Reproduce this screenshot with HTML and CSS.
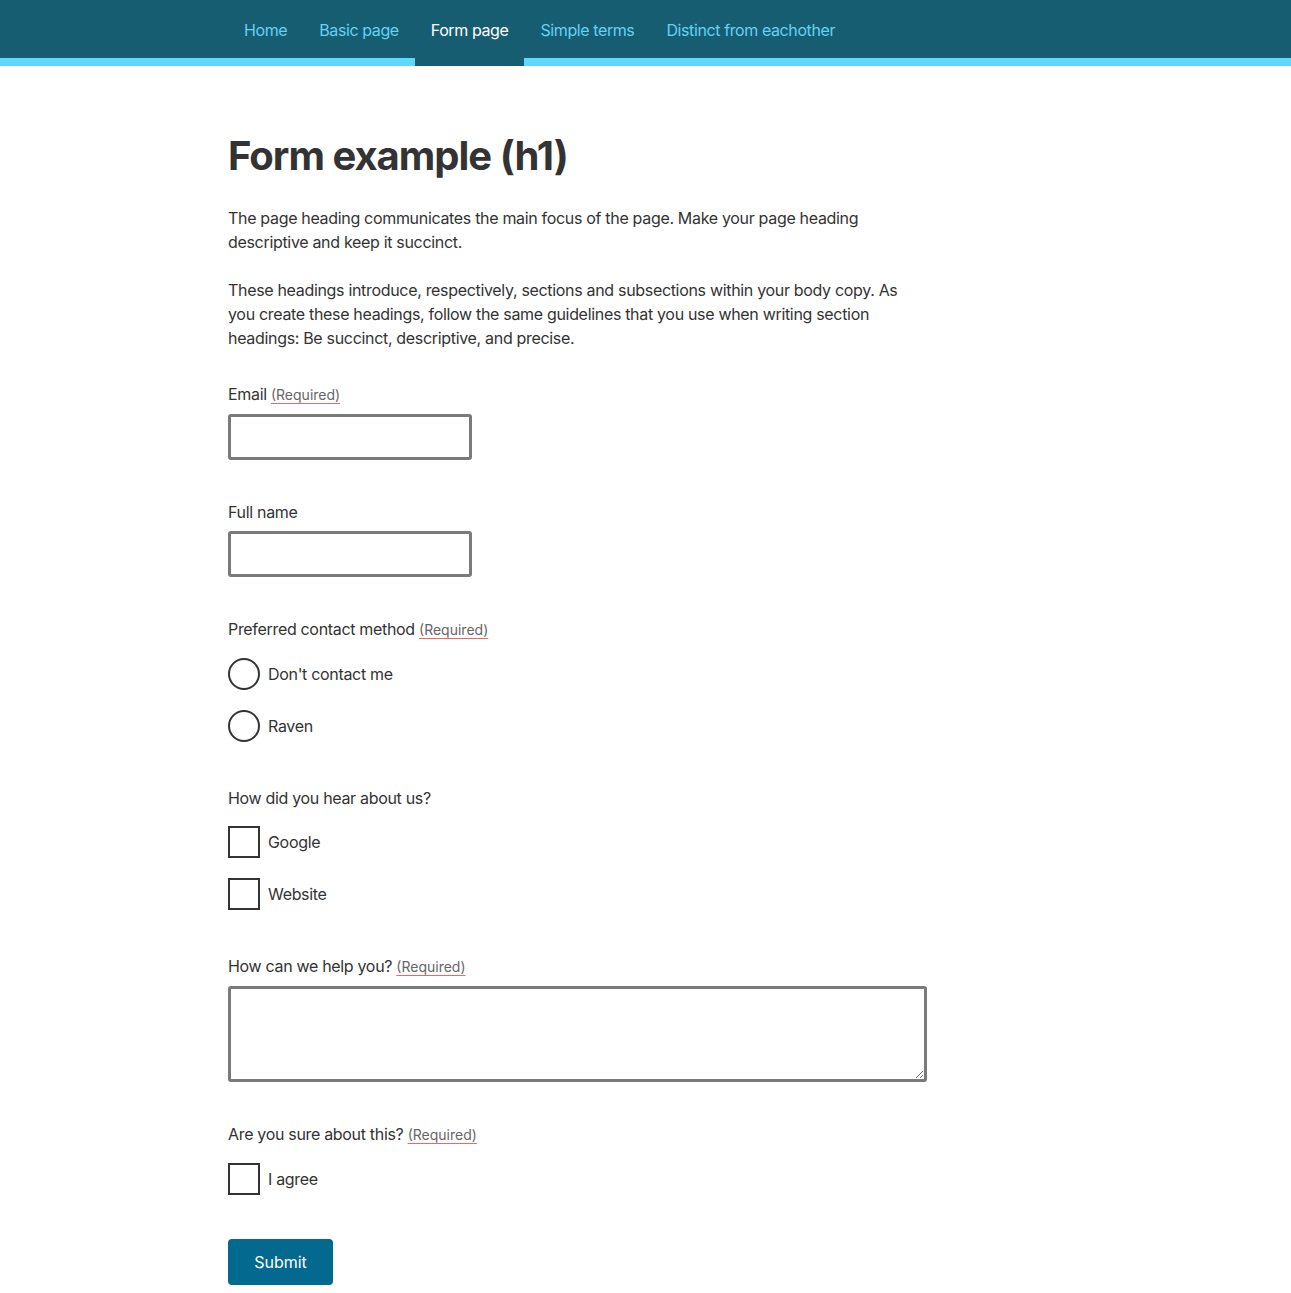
FILE: index.html
```html
<!DOCTYPE html>
<html lang="en">
<head>
<meta charset="utf-8">
<title>Form example</title>
<link rel="stylesheet" href="styles.css">
</head>
<body>
<header class="site-header">
  <nav class="nav">
    <ul class="nav-list">
      <li class="nav-item"><a class="nav-link" href="#">Home</a></li>
      <li class="nav-item"><a class="nav-link" href="#">Basic page</a></li>
      <li class="nav-item nav-item--active"><a class="nav-link" href="#">Form page</a></li>
      <li class="nav-item"><a class="nav-link" href="#">Simple terms</a></li>
      <li class="nav-item"><a class="nav-link" href="#">Distinct from eachother</a></li>
    </ul>
  </nav>
</header>
<main class="main">
  <h1 class="title">Form example (h1)</h1>
  <p class="lead">The page heading communicates the main focus of the page. Make your page heading descriptive and keep it succinct.</p>
  <p class="lead">These headings introduce, respectively, sections and subsections within your body copy. As you create these headings, follow the same guidelines that you use when writing section headings: Be succinct, descriptive, and precise.</p>

  <form class="form">
    <div class="field">
      <label class="label" for="email">Email <abbr class="req" title="Required">(Required)</abbr></label>
      <input class="input" id="email" type="email">
    </div>
    <div class="field">
      <label class="label" for="name">Full name</label>
      <input class="input" id="name" type="text">
    </div>
    <fieldset class="field group">
      <legend class="label">Preferred contact method <abbr class="req" title="Required">(Required)</abbr></legend>
      <label class="choice"><span class="radio"></span><span>Don't contact me</span></label>
      <label class="choice"><span class="radio"></span><span>Raven</span></label>
    </fieldset>
    <fieldset class="field group">
      <legend class="label">How did you hear about us?</legend>
      <label class="choice"><span class="check"></span><span>Google</span></label>
      <label class="choice"><span class="check"></span><span>Website</span></label>
    </fieldset>
    <div class="field">
      <label class="label" for="help">How can we help you? <abbr class="req" title="Required">(Required)</abbr></label>
      <textarea class="textarea" id="help"></textarea>
    </div>
    <fieldset class="field group">
      <legend class="label">Are you sure about this? <abbr class="req" title="Required">(Required)</abbr></legend>
      <label class="choice"><span class="check"></span><span>I agree</span></label>
    </fieldset>
    <button class="submit" type="button">Submit</button>
  </form>
</main>
</body>
</html>
```

FILE: styles.css
```css
* { box-sizing: border-box; }
html, body { margin: 0; padding: 0; }
body {
  font-family: Inter, "Noto Sans", sans-serif;
  color: #333;
  background: #fff;
  font-size: 16px;
  line-height: 24px;
  letter-spacing: -0.32px;
}
.site-header {
  background: #165d72;
  border-bottom: 8px solid #5fd8fc;
  height: 66px;
}
.nav { padding-left: 228px; }
.nav-list {
  list-style: none;
  margin: 0 0 -8px;
  padding: 0;
  display: flex;
  height: 66px;
}
.nav-item {
  height: 66px;
}
.nav-item--active { background: #165d72; }
.nav-link {
  display: block;
  padding: 18px 16px 0;
  color: #63d3f2;
  text-decoration: none;
  font-size: 16px;
  line-height: 24px;
  letter-spacing: -0.4px;
}
.nav-item--active .nav-link { color: #fff; }

.main {
  padding: 66px 0 40px 228px;
  width: 940px;
}
.title {
  font-size: 40px;
  line-height: 48px;
  font-weight: 700;
  margin: 0 0 26px;
  letter-spacing: -1px;
  color: #333;
}
.lead {
  margin: 0 0 24px;
  width: 690px;
}
.form { margin-top: 32px; }
.field {
  margin: 0 0 40px;
  padding: 0;
  border: 0;
}
.group { margin-bottom: 44px; }
.label {
  display: block;
  padding: 0;
  margin-bottom: 7px;
}
.req {
  font-size: 14px;
  letter-spacing: 0;
  color: #666;
  text-decoration: underline;
  text-decoration-color: #e66;
  text-underline-offset: 3px;
}
.input {
  display: block;
  width: 244px;
  height: 46px;
  border: 3px solid #7a7a7a;
  border-radius: 3px;
  font: inherit;
  padding: 0 10px;
}
.textarea {
  display: block;
  width: 699px;
  height: 96px;
  border: 3px solid #7a7a7a;
  border-radius: 3px;
  font: inherit;
  padding: 8px 10px;
  resize: both;
}
.group legend { float: left; width: 100%; margin-bottom: 16px; }
.group .choice { clear: both; }
.choice {
  display: flex;
  align-items: center;
  gap: 8px;
  height: 32px;
  margin-bottom: 20px;
}
.choice:last-child { margin-bottom: 0; }
.radio {
  width: 32px;
  height: 32px;
  border: 2px solid #333;
  border-radius: 50%;
  flex: none;
}
.check {
  width: 32px;
  height: 32px;
  border: 2px solid #333;
  flex: none;
}
.submit {
  display: block;
  margin-top: 43px;
  background: #03698f;
  color: #fff;
  border: 0;
  border-radius: 4px;
  font: inherit;
  font-size: 16px;
  padding: 0;
  height: 46px;
  width: 105px;
}
```
